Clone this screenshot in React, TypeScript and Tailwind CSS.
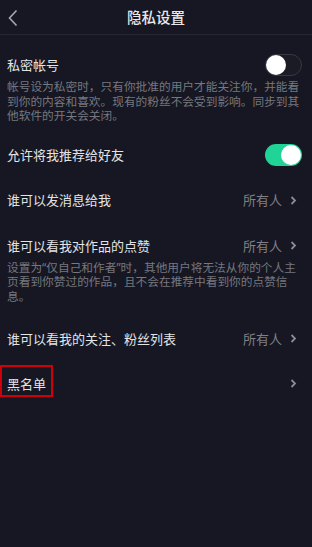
import React, { useState } from 'react';

const FONT = { fontFamily: '"Noto Sans CJK SC", "Noto Sans", sans-serif' };
// 说明文字：拉丁字体在前，引号更窄
const DESC_FONT = { fontFamily: '"Noto Sans", "Noto Sans CJK SC", sans-serif' };

function Toggle({ on, onChange }: { on: boolean; onChange: () => void }) {
  return (
    <button
      onClick={onChange}
      className={`relative w-[37px] h-[22px] rounded-full shrink-0 ${
        on ? 'bg-[#20d497]' : 'bg-[#1a1b25] border-[1.5px] border-[#363742]'
      }`}
    >
      <span
        className={`absolute top-1/2 -translate-y-1/2 w-[20px] h-[20px] rounded-full bg-white ${
          on ? 'right-[1px]' : 'left-0'
        }`}
      />
    </button>
  );
}

function Chevron() {
  return (
    <svg width="7" height="9" viewBox="0 0 7 9" className="shrink-0">
      <path d="M1.5 1 L5 4.5 L1.5 8" fill="none" stroke="#8a8b93" strokeWidth="1.8" />
    </svg>
  );
}

function LinkRow({ label, value }: { label: React.ReactNode; value?: string }) {
  return (
    <div className="flex items-center justify-between h-[45px] pl-[7px] pr-[15px]">
      <span className="text-[13px] text-[#e4e4e6]">{label}</span>
      <div className="flex items-center gap-[8px]">
        {value && <span className="text-[13px] text-[#7f8088]">{value}</span>}
        <Chevron />
      </div>
    </div>
  );
}

export default function App() {
  const [isPrivate, setIsPrivate] = useState(false);
  const [recommend, setRecommend] = useState(true);

  return (
    <div className="w-[312px] h-[547px] bg-[#161722] overflow-hidden" style={FONT}>
      {/* 顶部导航 */}
      <div className="relative flex items-center justify-center h-[35px] border-b border-[#262731]">
        <svg width="12" height="18" viewBox="0 0 12 18" className="absolute left-[7px] top-[9px]">
          <path d="M9.5 1.5 L2.5 9 L9.5 16.5" fill="none" stroke="#a7a8ae" strokeWidth="1.6" />
        </svg>
        <span className="text-[14.5px] font-medium text-[#e8e8ea]">隐私设置</span>
      </div>

      {/* 私密帐号 */}
      <div className="pt-[19px] pl-[7px] pr-[10px]">
        <div className="flex items-center justify-between h-[22px]">
          <span className="text-[13px] text-[#e4e4e6]">私密帐号</span>
          <Toggle on={isPrivate} onChange={() => setIsPrivate(!isPrivate)} />
        </div>
        <p className="mt-[3px] w-[294px] text-[11.7px] leading-[14.5px] text-[#76777f]" style={DESC_FONT}>
          帐号设为私密时，只有你批准的用户才能关注你，并能看到你的内容和喜欢。现有的粉丝不会受到影响。同步到其他软件的开关会关闭。
        </p>
      </div>

      {/* 允许将我推荐给好友 */}
      <div className="mt-[10px] flex items-center justify-between h-[45px] pl-[7px] pr-[10px]">
        <span className="text-[13px] text-[#e4e4e6]">允许将我推荐给好友</span>
        <Toggle on={recommend} onChange={() => setRecommend(!recommend)} />
      </div>

      <LinkRow label="谁可以发消息给我" value="所有人" />

      {/* 点赞 */}
      <div className="pt-[12px] pl-[7px]">
        <div className="flex items-center justify-between h-[22px] pr-[15px]">
          <span className="text-[13px] text-[#e4e4e6]">谁可以看我对作品的点赞</span>
          <div className="flex items-center gap-[8px]">
            <span className="text-[13px] text-[#7f8088]">所有人</span>
            <Chevron />
          </div>
        </div>
        <p className="mt-[3px] w-[294px] text-[11.7px] leading-[14.5px] text-[#76777f]" style={DESC_FONT}>
          设置为“仅自己和作者”时，其他用户将无法从你的个人主页看到你赞过的作品，且不会在推荐中看到你的点赞信息。
        </p>
      </div>

      <div className="mt-[13px]">
        <LinkRow label="谁可以看我的关注、粉丝列表" value="所有人" />
        <LinkRow
          label={
            <span className="relative">
              黑名单
              <span className="absolute left-[-7px] w-[53px] top-[-9px] h-[32px] border-2 border-[#d0000a]" />
            </span>
          }
        />
      </div>
    </div>
  );
}
